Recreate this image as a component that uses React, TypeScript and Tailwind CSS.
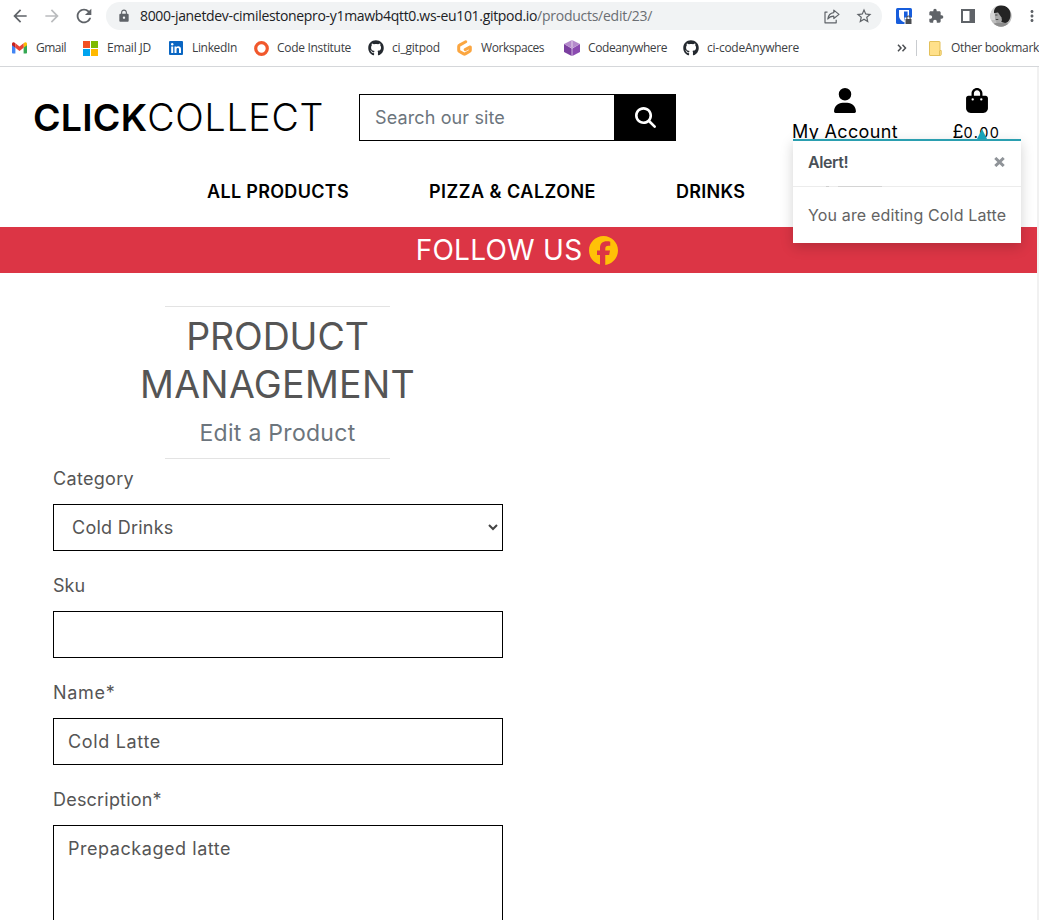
import type { ReactNode } from "react";
import { MdArrowBack, MdArrowForward, MdRefresh, MdLock, MdExtension, MdStarBorder, MdMoreVert } from "react-icons/md";
import { FaBagShopping, FaFacebook, FaGithub, FaMagnifyingGlass, FaUser } from "react-icons/fa6";

function GmailIcon() {
  return (
    <svg width="15" height="12" viewBox="0 0 15 12">
      <path d="M0 2v8.600c0 .6.5 1 1 1h2.400V4z" fill="#4285f4" />
      <path d="M15 2v8.600c0 .6-.5 1-1 1h-2.400V4z" fill="#34a853" />
      <path d="M11.600 1.400v4.400L15 3.200V1.900C15 .3 13.200-.2 12.200.8z" fill="#fbbc04" />
      <path d="M3.400 1.400v4.400L0 3.200V1.900C0 .3 1.800-.2 2.800.8z" fill="#c5221f" />
      <path d="M3.400 1.300 7.500 4.400l4.100-3.100v4.500L7.500 8.900 3.400 5.800z" fill="#ea4335" />
    </svg>
  );
}

function MicrosoftIcon() {
  return (
    <svg width="15" height="15" viewBox="0 0 15 15">
      <path d="M0 0h7v7H0z" fill="#f25022" />
      <path d="M8 0h7v7H8z" fill="#7fba00" />
      <path d="M0 8h7v7H0z" fill="#00a4ef" />
      <path d="M8 8h7v7H8z" fill="#ffb900" />
    </svg>
  );
}

function LinkedInIcon() {
  return (
    <svg width="14" height="14" viewBox="0 0 14 14">
      <rect width="14" height="14" rx="1" fill="#0a66c2" />
      <circle cx="3.200" cy="3.300" r="1.200" fill="#fff" />
      <path d="M2.200 5.400h2V12h-2zM5.500 5.400h1.900v.9c.9-1.500 4.600-1.600 4.600 1.700v4h-2V8.500c0-2-2.500-1.800-2.500 0V12h-2z" fill="#fff" />
    </svg>
  );
}

function CodeInstituteIcon() {
  return (
    <svg width="15" height="15" viewBox="0 0 15 15">
      <circle cx="7.500" cy="7.500" r="5.800" fill="none" stroke="#f1582c" strokeWidth="3.200" />
    </svg>
  );
}

function GitpodIcon() {
  return (
    <svg width="15" height="16" viewBox="0 0 15 16" fill="none" stroke="#fba640" strokeWidth="3" strokeLinejoin="round" strokeLinecap="round">
      <path d="M8.700 1.700 2.600 5.100c-.6.300-.9.700-.9 1.300v3.800c0 .6.300 1 .8 1.300l4.200 2.400c.5.300 1 .3 1.500 0l4.200-2.400c.6-.3.900-.7.900-1.300V6.900L8.200 9.600" />
    </svg>
  );
}

function CodeanywhereIcon() {
  return (
    <svg width="16" height="16" viewBox="0 0 16 16">
      <path d="M8 0 16 4 8 8.300 0 4z" fill="#b48acb" />
      <path d="M0 4 7.700 8.400V16L0 12z" fill="#7b3fa0" />
      <path d="M16 4 8.300 8.400V16l7.700-4z" fill="#8b4bb0" />
      <path d="M7.500 0h1v7.600h-1z" fill="#e3d2ec" />
    </svg>
  );
}

function ShareIcon() {
  return (
    <svg width="16" height="15" viewBox="0 0 16 15" fill="none" stroke="#5f6368" strokeWidth="1.200" strokeLinejoin="round">
      <path d="M3.500 3.200H1v10.600h11.200v-3" />
      <path d="M9.800 1.100 15 5.400 9.800 9.500V7.200C7 7.200 5.200 8 3.800 10 4.300 6.300 6.300 4 9.800 3.600z" />
    </svg>
  );
}

function ShieldIcon() {
  return (
    <svg width="17" height="17" viewBox="0 0 17 17">
      <rect width="16" height="16" rx="1.500" fill="#175ddc" />
      <path d="M3 2h10v6c0 3-2.500 5-5 6.300C5.500 13 3 11 3 8z" fill="#fff" />
      <path d="M8 3.500h3.600V8c0 1.800-1.600 3.500-3.600 4.700z" fill="#175ddc" />
      <path d="M8.500 9.500h7.500V16H8.500z" fill="#fff" />
      <path d="M9.500 11h6v5h-6z" fill="#4a4d51" />
      <path d="M10.900 11V9.600a1.600 1.600 0 0 1 3.200 0V11" fill="none" stroke="#4a4d51" strokeWidth="1.100" />
    </svg>
  );
}

function SidePanelIcon() {
  return (
    <svg width="14" height="14" viewBox="0 0 14 14">
      <path d="M0 0h14v14H0zM2 2v10h6.500V2z" fill="#5f6368" fillRule="evenodd" />
    </svg>
  );
}

function Avatar() {
  return (
    <svg width="22" height="22" viewBox="0 0 22 22">
      <defs>
        <clipPath id="avatar-clip">
          <circle cx="11" cy="11" r="10.700" />
        </clipPath>
      </defs>
      <g clipPath="url(#avatar-clip)">
        <rect width="22" height="22" fill="#bdbdbd" />
        <path d="M0 0h6v15H0z" fill="#d6d6d6" />
        <path d="M4 6C5 1 9 0 12 .5c6 .5 9 5 8.500 10-.3 4-2 7-5.500 7.500-2 0-4-1-4.500-3L8.500 9 4 8z" fill="#242424" />
        <path d="M4.800 8 8 7.500l3.500 5 .5 3-3 2H6.500L5 14z" fill="#a8a8a8" />
        <path d="M4 18.500c4-1.500 9-1 14 0V22H4z" fill="#8d8d8d" />
        <path d="M5.200 9.500h2.300v1H5.200zM5.800 14h2.500v1H5.800z" fill="#444" />
      </g>
    </svg>
  );
}

function FolderIcon() {
  return (
    <svg width="13" height="15" viewBox="0 0 13 15">
      <path d="M.5 1C.5.700.700.500 1 .5h9.500c.3 0 .5.200.5.500v8.500h1.200v4c0 .6-.3 1-.8 1H1c-.3 0-.5-.2-.5-.5z" fill="#ffe08a" stroke="#e3c05a" />
      <path d="M10.500 14v-4.500" stroke="#e3c05a" />
    </svg>
  );
}

function Bookmark({ icon, label, className, labelClass }: { icon: ReactNode; label: string; className: string; labelClass: string }) {
  return (
    <div className={`flex shrink-0 items-center whitespace-nowrap ${className}`}>
      <span className="flex w-6 shrink-0 items-center">{icon}</span>
      <span className={labelClass}>{label}</span>
    </div>
  );
}

function BrowserChrome() {
  return (
    <div className="h-[67px] shrink-0 border-b border-[#d5d7da] bg-white font-['Open_Sans',sans-serif] text-[#3c4043]">
      <div className="flex h-8 items-center pl-[10px]">
        <MdArrowBack className="size-5 shrink-0 text-[#5f6368]" />
        <MdArrowForward className="ml-3 size-5 shrink-0 text-[#babcbe]" />
        <MdRefresh className="ml-[11px] size-[22px] shrink-0 text-[#5f6368]" />
        <div className="ml-[11px] flex h-[28px] w-[776px] shrink-0 items-center rounded-full bg-[#f1f3f4] pl-[11px] text-sm">
          <MdLock className="size-[14px] text-[#5f6368]" />
          <div className="ml-[9px] flex w-[684px] whitespace-nowrap">
            <span className="tracking-[-0.32px] text-[#202124]">8000-janetdev-cimilestonepro-y1mawb4qtt0.ws-eu101.gitpod.io</span>
            <span className="tracking-[-0.26px] text-[#6a6e73]">/products/edit/23/</span>
          </div>
          <ShareIcon />
          <MdStarBorder className="ml-[15px] size-[18px] text-[#5f6368]" />
        </div>
        <div className="ml-[14px] shrink-0"><ShieldIcon /></div>
        <MdExtension className="ml-[15px] size-4 shrink-0 text-[#5f6368]" />
        <div className="ml-[17px] shrink-0"><SidePanelIcon /></div>
        <div className="ml-[15px] shrink-0"><Avatar /></div>
        <MdMoreVert className="ml-[11px] size-[18px] shrink-0 text-[#5f6368]" />
      </div>
      <div className="flex h-8 items-center overflow-hidden pl-3 text-xs">
        <Bookmark icon={<GmailIcon />} label="Gmail" className="w-[71px]" labelClass="tracking-[-0.5px]" />
        <Bookmark icon={<MicrosoftIcon />} label="Email JD" className="w-[86px]" labelClass="tracking-[-0.2px]" />
        <Bookmark icon={<LinkedInIcon />} label="LinkedIn" className="w-[85px]" labelClass="-ml-px tracking-[-0.34px]" />
        <Bookmark icon={<CodeInstituteIcon />} label="Code Institute" className="w-[114px]" labelClass="-ml-px tracking-[-0.31px]" />
        <Bookmark icon={<FaGithub className="size-4 text-[#24292f]" />} label="ci_gitpod" className="w-[89px]" labelClass="tracking-[-0.2px]" />
        <Bookmark icon={<GitpodIcon />} label="Workspaces" className="w-[107px]" labelClass="tracking-[-0.44px]" />
        <Bookmark icon={<CodeanywhereIcon />} label="Codeanywhere" className="w-[119px]" labelClass="tracking-[-0.41px]" />
        <Bookmark icon={<FaGithub className="size-4 text-[#24292f]" />} label="ci-codeAnywhere" className="w-[214px]" labelClass="tracking-[-0.25px]" />
        <svg width="10" height="8" viewBox="0 0 10 8" className="shrink-0" fill="none" stroke="#4b4e52" strokeWidth="1.500">
          <path d="m1 .8 3 3.200-3 3.200M5.500.8l3 3.200-3 3.200" />
        </svg>
        <span className="ml-[9px] h-4 w-px shrink-0 bg-[#c9ccd0]" />
        <span className="ml-3 shrink-0"><FolderIcon /></span>
        <span className="ml-[9px] whitespace-nowrap tracking-[-0.35px]">Other bookmark</span>
      </div>
    </div>
  );
}

function AlertToast() {
  return (
    <div className="absolute top-[72px] left-[793px] w-[228px] border-t-2 border-[#2a9fb0] bg-white shadow-[0_4px_12px_rgba(0,0,0,0.18)]">
      <svg className="absolute -top-[12px] left-[183px]" width="12" height="10" viewBox="0 0 12 10">
        <path d="M1 10 6 0l5 10z" fill="#17a2b8" />
      </svg>
      <div className="flex h-[46px] items-center justify-between border-b border-[#ececec] pr-4 pb-[3px] pl-[15px]">
        <strong className="text-[16px] font-semibold tracking-[-0.4px] text-[#495057]">Alert!</strong>
        <svg width="11" height="10" viewBox="0 0 11 10" stroke="#8f9398" strokeWidth="3">
          <path d="m1.300 1 8.400 8M9.700 1 1.300 9" />
        </svg>
      </div>
      <div className="flex h-[56px] items-center pl-[15px] text-[16px] tracking-[0.15px] whitespace-nowrap text-[#636363]">You are editing Cold Latte</div>
      <span className="absolute top-[45px] left-[33px] h-px w-[3px] bg-[#cfcfcf]" />
      <span className="absolute top-[45px] left-[45px] h-px w-[44px] bg-[#d4d4d4]" />
    </div>
  );
}

function Header() {
  return (
    <header className="relative text-black">
      <div className="flex h-[74px] items-start">
        <h1 className="mt-[20px] ml-[33px] w-[326px] pt-px text-[37.5px] leading-[60px] font-light whitespace-nowrap">
          <strong className="font-semibold tracking-[0.2px]">CLICK</strong>
          <span className="tracking-[0.75px]">COLLECT</span>
        </h1>
        <div className="mt-[27px] flex h-[47px] w-[317px]">
          <div className="flex w-[255px] items-center border border-r-0 border-black pl-[15px] text-[18px] tracking-[0.12px] text-[#6c757d]">Search our site</div>
          <button className="flex w-[62px] items-center justify-center bg-black text-white">
            <FaMagnifyingGlass className="size-[21px]" />
          </button>
        </div>
        <div className="mt-[21px] ml-[116px] flex w-[106px] flex-col items-center whitespace-nowrap">
          <FaUser className="h-[25px] w-[22px]" />
          <span className="mt-[5px] text-[18px] leading-[27px] tracking-[0.35px]">My Account</span>
        </div>
        <div className="mt-[21px] ml-[54px] flex w-[49px] flex-col items-center whitespace-nowrap">
          <FaBagShopping className="h-[25px] w-[22px]" />
          <span className="mt-[5px] text-[18px] leading-[27px]">
            £<span className="text-[14.5px] tracking-[1.5px]">0.00</span>
          </span>
        </div>
      </div>
      <nav className="flex h-[86px] items-center pt-[15px] pl-[207px] text-[18px] font-semibold whitespace-nowrap">
        <a className="w-[222px] tracking-[0.31px]">ALL PRODUCTS</a>
        <a className="w-[247px] tracking-[0.48px]">PIZZA &amp; CALZONE</a>
        <a className="tracking-[0.3px]">DRINKS</a>
      </nav>
      <AlertToast />
    </header>
  );
}

function Field({ label, labelClass, children }: { label: string; labelClass: string; children: ReactNode }) {
  return (
    <div>
      <label className={`block h-[37px] leading-[37px] ${labelClass}`}>{label}</label>
      <div className="mt-[7px] mb-4">{children}</div>
    </div>
  );
}

export default function App() {
  return (
    <div className="flex h-[920px] w-[1039px] flex-col overflow-hidden bg-white font-['Inter','Liberation_Sans',sans-serif]">
      <BrowserChrome />
      <div className="flex min-h-0 flex-1">
        <div className="w-[1037px]">
          <Header />
          <div className="flex h-[46px] items-center justify-center bg-[#dc3545] pr-[3px] text-[28px] text-white">
            <span className="tracking-[0.25px]">FOLLOW US</span>
            <FaFacebook className="ml-[7px] size-[29px] text-[#ffc107]" />
          </div>
          <main className="ml-[53px] w-[450px] pt-[33px] text-[18px] text-[#555]">
            <div className="flex w-[449px] flex-col items-center text-center">
              <hr className="w-[225px] border-[#e3e3e3]" />
              <h2 className="mt-[6px] text-[37.5px] leading-[48px] text-[#555]">
                <span className="block tracking-[-0.1px]">PRODUCT</span>
                <span className="block tracking-[0.3px]">MANAGEMENT</span>
              </h2>
              <h5 className="mt-[7px] text-[23px] leading-[34px] tracking-[0.29px] text-[#6c757d]">Edit a Product</h5>
              <hr className="mt-2 w-[225px] border-[#e3e3e3]" />
            </div>
            <div className="mt-px">
              <Field label="Category" labelClass="tracking-[0.32px]">
                <div className="flex h-[47px] items-center justify-between border border-black pr-[4px] pl-[18px] tracking-[0.25px]">
                  Cold Drinks
                  <svg width="10" height="7" viewBox="0 0 10 7" fill="none" stroke="#444" strokeWidth="2">
                    <path d="m1 1 4 4 4-4" />
                  </svg>
                </div>
              </Field>
              <Field label="Sku" labelClass="">
                <div className="h-[47px] border border-black" />
              </Field>
              <Field label="Name*" labelClass="tracking-[0.7px]">
                <div className="flex h-[47px] items-center border border-black pl-[14px] tracking-[0.67px]">Cold Latte</div>
              </Field>
              <Field label="Description*" labelClass="tracking-[0.2px]">
                <div className="h-[140px] border border-black pl-[14px] leading-[45px] tracking-[0.55px]">Prepackaged latte</div>
              </Field>
            </div>
          </main>
        </div>
        <div className="w-[2px] bg-[#f1f1f1]" />
      </div>
    </div>
  );
}
